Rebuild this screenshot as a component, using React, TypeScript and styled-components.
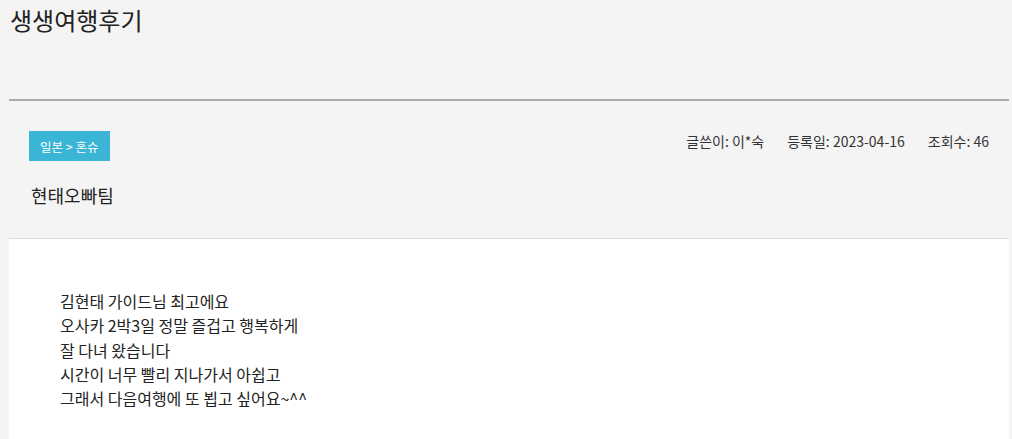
import React from 'react';
import styled, { createGlobalStyle } from 'styled-components';

const GlobalStyle = createGlobalStyle`
  html, body {
    margin: 0;
    padding: 0;
    background-color: #f4f4f4;
  }
  body {
    font-family: "Noto Sans CJK KR", "Noto Sans", sans-serif;
    color: #222;
  }
`;

const Page = styled.div`
  width: 1000px;
  margin-left: 9px;
`;

const Header = styled.header`
  height: 99px;
  border-bottom: 2px solid #a9a9a9;
`;

const BoardTitle = styled.h1`
  margin: 0;
  padding-left: 1px;
  font-size: 24px;
  font-weight: 400;
  line-height: 40px;
  color: #222;
`;

const PostInfo = styled.section`
  padding: 30px 20px 31px 20px;
  border-bottom: 1px solid #dedede;
`;

const TopRow = styled.div`
  display: flex;
  justify-content: space-between;
  align-items: flex-start;
`;

const Category = styled.span`
  display: inline-flex;
  align-items: center;
  height: 30px;
  padding: 0 11px;
  background-color: #3bb5d6;
  color: #fff;
  font-size: 12.5px;
`;

const MetaList = styled.ul`
  display: flex;
  gap: 23px;
  margin: 0;
  padding: 0;
  list-style: none;
  font-size: 14px;
  line-height: 20px;
  color: #333;
`;

const Subject = styled.h2`
  margin: 22px 0 0 2px;
  font-size: 18px;
  font-weight: 400;
  line-height: 24px;
  color: #222;
`;

const Content = styled.article`
  background-color: #fff;
  padding: 50px 51px 40px;
  font-size: 16px;
  line-height: 24.3px;
  color: #222;
`;

const lines = [
  '김현태 가이드님 최고에요',
  '오사카 2박3일 정말 즐겁고 행복하게',
  '잘 다녀 왔습니다',
  '시간이 너무 빨리 지나가서 아쉽고',
  '그래서 다음여행에 또 뵙고 싶어요~^^',
];

function App() {
  return (
    <>
      <GlobalStyle />
      <Page>
        <Header>
          <BoardTitle>생생여행후기</BoardTitle>
        </Header>
        <PostInfo>
          <TopRow>
            <Category>일본 &gt; 혼슈</Category>
            <MetaList>
              <li>글쓴이: 이*숙</li>
              <li>등록일: 2023-04-16</li>
              <li>조회수: 46</li>
            </MetaList>
          </TopRow>
          <Subject>현태오빠팀</Subject>
        </PostInfo>
        <Content>
          {lines.map((line) => (
            <div key={line}>{line}</div>
          ))}
        </Content>
      </Page>
    </>
  );
}

export default App;
